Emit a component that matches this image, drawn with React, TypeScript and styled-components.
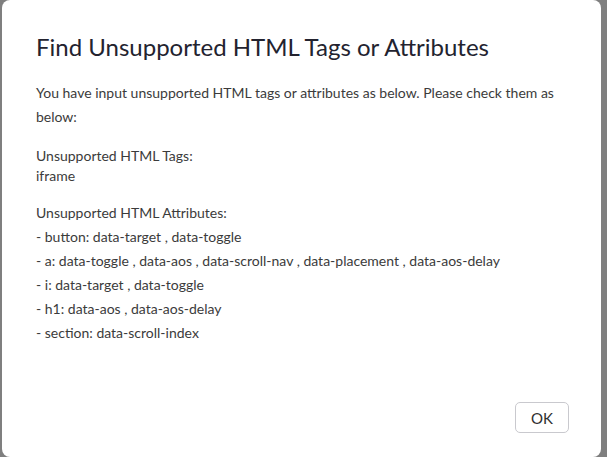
import React from "react";
import styled, { createGlobalStyle } from "styled-components";

const GlobalStyle = createGlobalStyle`
  html, body {
    margin: 0;
    padding: 0;
    width: 607px;
    height: 457px;
    overflow: hidden;
  }
  body {
    font-family: Lato, "Open Sans", sans-serif;
    background: #ffffff;
  }
`;

const Overlay = styled.div`
  width: 607px;
  height: 457px;
  background: #7f7f7f;
  display: flex;
  padding-left: 2px;
  box-sizing: border-box;
`;

const Modal = styled.div`
  width: 599px;
  height: 457px;
  background: #ffffff;
  border-radius: 8px;
  display: flex;
  flex-direction: column;
  box-sizing: border-box;
  padding: 0 32px 24px 34px;
`;

const Title = styled.h2`
  margin: 0;
  padding-top: 33px;
  font-size: 24px;
  font-weight: 400;
  line-height: 28px;
  color: #23232f;
`;

const Body = styled.div`
  flex: 1;
  padding-top: 20px;
  font-size: 14px;
  color: #3b3b3b;
`;

const Para = styled.p<{ $lh: number; $gap: number }>`
  margin: ${(p) => p.$gap}px 0 0;
  line-height: ${(p) => p.$lh}px;
`;

const Footer = styled.div`
  display: flex;
  justify-content: flex-end;
`;

const OkButton = styled.button`
  width: 54px;
  height: 31px;
  border: 1px solid #c9c9ce;
  border-radius: 5px;
  background: #ffffff;
  font-family: Lato, sans-serif;
  font-size: 15px;
  color: #2f2f2f;
  cursor: pointer;
`;

const attributes = [
  "- button: data-target , data-toggle",
  "- a: data-toggle , data-aos , data-scroll-nav , data-placement , data-aos-delay",
  "- i: data-target , data-toggle",
  "- h1: data-aos , data-aos-delay",
  "- section: data-scroll-index",
];

export default function App() {
  return (
    <>
      <GlobalStyle />
      <Overlay>
        <Modal>
          <Title>Find Unsupported HTML Tags or Attributes</Title>
          <Body>
            <Para $lh={24} $gap={0}>
              You have input unsupported HTML tags or attributes as below. Please check them as
              <br />
              below:
            </Para>
            <Para $lh={20} $gap={17}>
              Unsupported HTML Tags:
              <br />
              iframe
            </Para>
            <Para $lh={24} $gap={15}>
              Unsupported HTML Attributes:
              {attributes.map((a) => (
                <React.Fragment key={a}>
                  <br />
                  {a}
                </React.Fragment>
              ))}
            </Para>
          </Body>
          <Footer>
            <OkButton>OK</OkButton>
          </Footer>
        </Modal>
      </Overlay>
    </>
  );
}
